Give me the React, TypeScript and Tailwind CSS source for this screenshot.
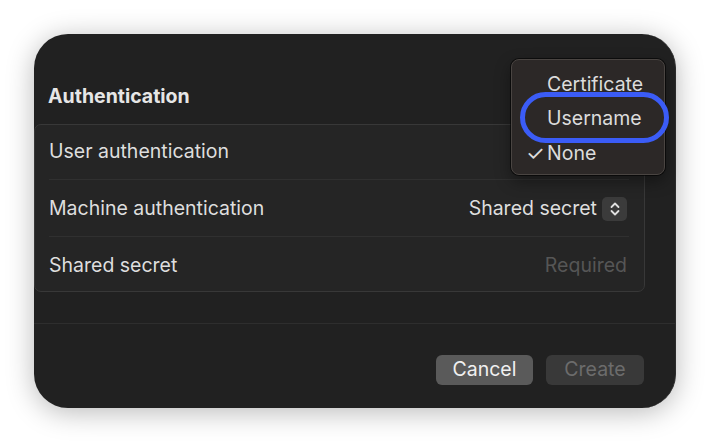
import React from "react";

const rows = [
  { label: "User authentication", value: null, h: "h-[54px]" },
  { label: "Machine authentication", value: "select", h: "h-[56px] pt-[2px]" },
  { label: "Shared secret", value: "placeholder", h: "h-[54px] pt-[3px]" },
];

export default function App() {
  return (
    <div
      className="relative w-[710px] h-[442px] bg-white overflow-hidden pt-[34px] pl-[34px]"
      style={{ fontFamily: "Inter, 'Noto Sans', sans-serif" }}
    >
      {/* Dialog */}
      <div className="w-[642px] h-[374px] bg-[#212121] rounded-[34px] border-r border-[#2c2c2c] shadow-[0_4px_28px_rgba(0,0,0,0.28)] flex flex-col overflow-hidden">
        <div className="h-[90px] flex items-end pb-[18px] pl-[14px]">
          <h2 className="text-[19.5px] font-bold text-[#e6e6e6] leading-none">Authentication</h2>
        </div>

        {/* Grouped form */}
        <div className="w-[611px] bg-[#252525] border border-[#383838] rounded-[7px] flex flex-col">
          {rows.map((row, i) => (
            <div key={row.label} className="pl-[14px] pr-[17px]">
              {i > 0 && <div className="h-px bg-[#303030] -mr-[2px]" />}
              <div className={`flex items-center justify-between ${row.h}`}>
                <span className="text-[19.5px] text-[#dedede]">{row.label}</span>
                {row.value === "select" && (
                  <div className="flex items-center gap-[5px]">
                    <span className="text-[19.5px] text-[#dedede]">Shared secret</span>
                    <span className="w-[25px] h-[24px] rounded-[5px] bg-[#3b3b3b] flex items-center justify-center">
                      <svg width="10" height="16" viewBox="0 0 10 16" fill="none">
                        <path d="M1.5 6 L5 2.5 L8.5 6" stroke="#e0e0e0" strokeWidth="1.8" strokeLinecap="round" strokeLinejoin="round" />
                        <path d="M1.5 10 L5 13.5 L8.5 10" stroke="#e0e0e0" strokeWidth="1.8" strokeLinecap="round" strokeLinejoin="round" />
                      </svg>
                    </span>
                  </div>
                )}
                {row.value === "placeholder" && (
                  <span className="text-[19.5px] text-[#565656]">Required</span>
                )}
              </div>
            </div>
          ))}
        </div>

        <div className="mt-[31px] h-px bg-[#2e2e2e]" />

        <div className="flex justify-end gap-[13px] pr-[31px] pt-[31px]">
          <button className="w-[97px] h-[30px] rounded-[6px] bg-[#5a5a5a] text-[19.5px] text-[#f0f0f0] leading-none">
            Cancel
          </button>
          <button className="w-[98px] h-[30px] rounded-[6px] bg-[#393939] text-[19.5px] text-[#6c6c6c] leading-none">
            Create
          </button>
        </div>
      </div>

      {/* Popup menu */}
      <div className="absolute left-[511px] top-[59px] w-[154px] h-[116px] bg-[#2c2827] border border-[#4a4542] rounded-[8px] shadow-[0_0_0_1px_rgba(0,0,0,0.6),0_6px_16px_rgba(0,0,0,0.4)] flex flex-col pt-[7px] pl-[14px]">
        {["Certificate", "Username", "None"].map((item) => (
          <div key={item} className="h-[34.5px] flex items-center text-[19.5px] text-[#dcdcdc]">
            <span className="w-[21px] text-[21px] leading-none">{item === "None" ? "✓" : ""}</span>
            <span>{item}</span>
          </div>
        ))}
      </div>

      {/* Highlight ring */}
      <div className="absolute left-[520px] top-[92px] w-[149px] h-[51px] rounded-full border-[5px] border-[#3b5cf6]" />
    </div>
  );
}
